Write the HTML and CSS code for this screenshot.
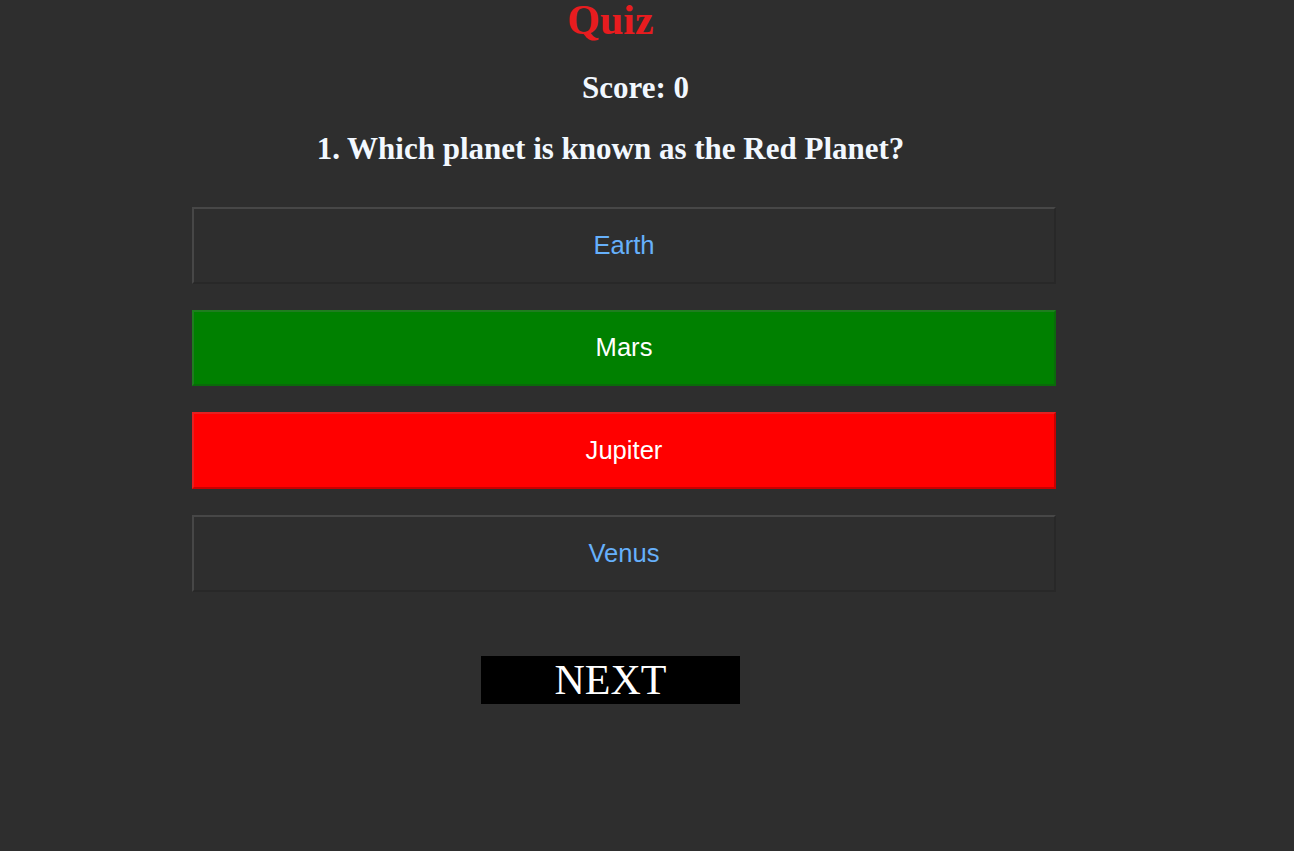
FILE: index.html
```html
<!DOCTYPE html>
<html lang="en">
<head>
<meta charset="utf-8">
<title>Quiz</title>
<link rel="stylesheet" href="styles.css">
</head>
<body>
<main class="quiz">
  <h1 class="title">Quiz</h1>
  <h2 class="score">Score: 0</h2>
  <h2 class="question">1. Which planet is known as the Red Planet?</h2>
  <div class="options">
    <button class="option">Earth</button>
    <button class="option correct">Mars</button>
    <button class="option wrong">Jupiter</button>
    <button class="option">Venus</button>
  </div>
  <div class="actions">
    <button class="next">NEXT</button>
  </div>
</main>
</body>
</html>
```
FILE: styles.css
```css
html, body {
  margin: 0;
  padding: 0;
  background: #2e2e2e;
}
.quiz {
  width: 864px;
  margin-left: 192px;
  display: flex;
  flex-direction: column;
  font-family: "Liberation Serif", "Times New Roman", serif;
}
.title {
  margin: 0;
  padding-right: 27px;
  text-align: center;
  font-size: 42px;
  line-height: 40px;
  font-weight: 700;
  color: #e81c1f;
}
.score {
  margin: 30.5px 0 0;
  padding-left: 23px;
  text-align: center;
  font-size: 31px;
  line-height: 34px;
  font-weight: 700;
  color: #f2f8ff;
}
.question {
  margin: 27.8px 0 0;
  padding-right: 27px;
  text-align: center;
  font-size: 31px;
  line-height: 34px;
  font-weight: 700;
  color: #f2f8ff;
}
.options {
  margin-top: 40.7px;
  display: flex;
  flex-direction: column;
  gap: 26px;
}
.option {
  box-sizing: border-box;
  width: 864px;
  height: 76.67px;
  margin: 0;
  padding: 0;
  border: 2px solid;
  border-color: #474747 #282828 #282828 #474747;
  background: #2e2e2e;
  color: #66b0fb;
  font-family: "Liberation Sans", Arial, sans-serif;
  font-size: 25.6px;
  text-align: center;
}
.option.correct {
  background: #008000;
  border-color: #1f7d1f #0a6b0a #0a6b0a #1f7d1f;
  color: #ffffff;
}
.option.wrong {
  background: #ff0000;
  border-color: #e62020 #c80000 #c80000 #e62020;
  color: #ffffff;
}
.actions {
  margin-top: 64.3px;
  display: flex;
  padding-left: 289px;
}
.next {
  width: 259px;
  height: 48px;
  margin: 0;
  padding: 0;
  border: none;
  background: #000;
  color: #fff;
  font-family: "Liberation Serif", "Times New Roman", serif;
  font-size: 42px;
  line-height: 48px;
}
```
